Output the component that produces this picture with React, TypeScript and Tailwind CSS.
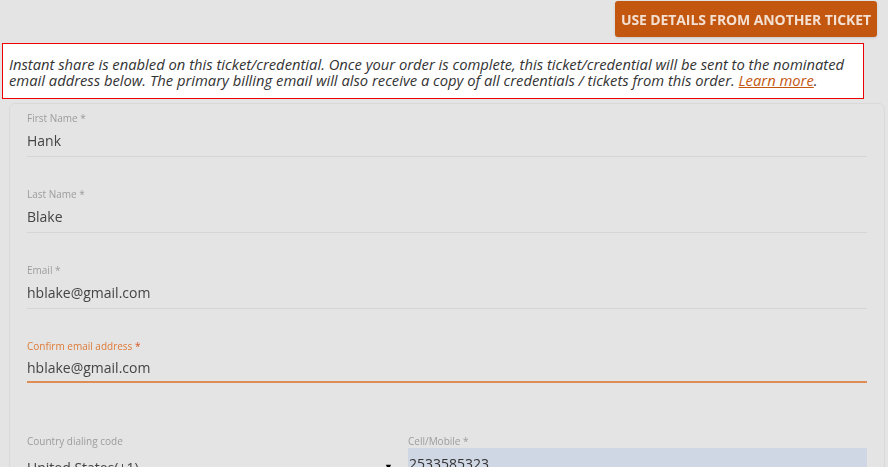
export default function App() {
  const fields = [
    { label: "First Name", value: "Hank" },
    { label: "Last Name", value: "Blake" },
    { label: "Email", value: "hblake@gmail.com" },
  ];

  return (
    <div className="h-[467px] overflow-hidden bg-[#e4e4e4] font-['Open_Sans',sans-serif]">
      {/* top action */}
      <div className="flex justify-end pr-[11px] pt-[1px] blur-[0.6px]">
        <button
          type="button"
          className="h-[36px] rounded-[3px] bg-[#c4570f] px-[6px] text-[14px] font-bold uppercase tracking-[-0.1px] text-[#f3e0d2] shadow-sm"
        >
          Use details from another ticket
        </button>
      </div>

      {/* instant share notice */}
      <div className="ml-[2px] mt-[6px] w-[862px] border border-[#ee0000] bg-white px-[6px] pt-[12px] pb-[10px] text-[14.75px] italic leading-[16px] text-[#333]">
        Instant share is enabled on this ticket/credential. Once your order is
        complete, this ticket/credential will be sent to the nominated email
        address below. The primary billing email will also receive a copy of
        all credentials / tickets from this order.{" "}
        <a href="#" className="text-[#c4570f] underline">
          Learn more
        </a>
        .
      </div>

      {/* form card */}
      <div className="ml-[9px] mr-[3px] mt-[4px] rounded-md border border-[#d9d9d9] px-[17px] pt-[8px] pb-[20px] blur-[0.6px]">
        {fields.map((f) => (
          <div key={f.label} className="mb-[31px]">
            <label className="block text-[10px] leading-[12px] text-[#9c9c9c]">
              {f.label} *
            </label>
            <div className="mt-[4px] h-[29px] border-b border-[#d6d6d6] pt-[3px] text-[14px] leading-[20px] text-[#444]">
              {f.value}
            </div>
          </div>
        ))}

        <div>
          <label className="block text-[10px] leading-[12px] text-[#df7a36]">
            Confirm email address <span className="text-[#d9531e]">*</span>
          </label>
          <div className="mt-[4px] h-[27px] border-b-2 border-[#de8d55] pt-[2px] text-[14px] leading-[20px] text-[#444]">
            hblake@gmail.com
          </div>
        </div>

        <div className="mt-[52px] grid grid-cols-[370px_1fr] gap-[11px]">
          <div>
            <label className="block text-[10px] leading-[12px] text-[#9c9c9c]">
              Country dialing code
            </label>
            <div className="mt-[6px] flex h-[28px] items-center justify-between text-[14px] text-[#444]">
              <span>United States(+1)</span>
              <span className="mr-[4px] text-[9px] text-black">▼</span>
            </div>
          </div>
          <div>
            <label className="block text-[10px] leading-[12px] text-[#9c9c9c]">
              Cell/Mobile *
            </label>
            <div className="mt-[1px] flex h-[30px] items-center bg-[#cfd6e4] px-[1px] text-[14px] text-[#333]">
              2533585323
            </div>
          </div>
        </div>
      </div>
    </div>
  );
}
